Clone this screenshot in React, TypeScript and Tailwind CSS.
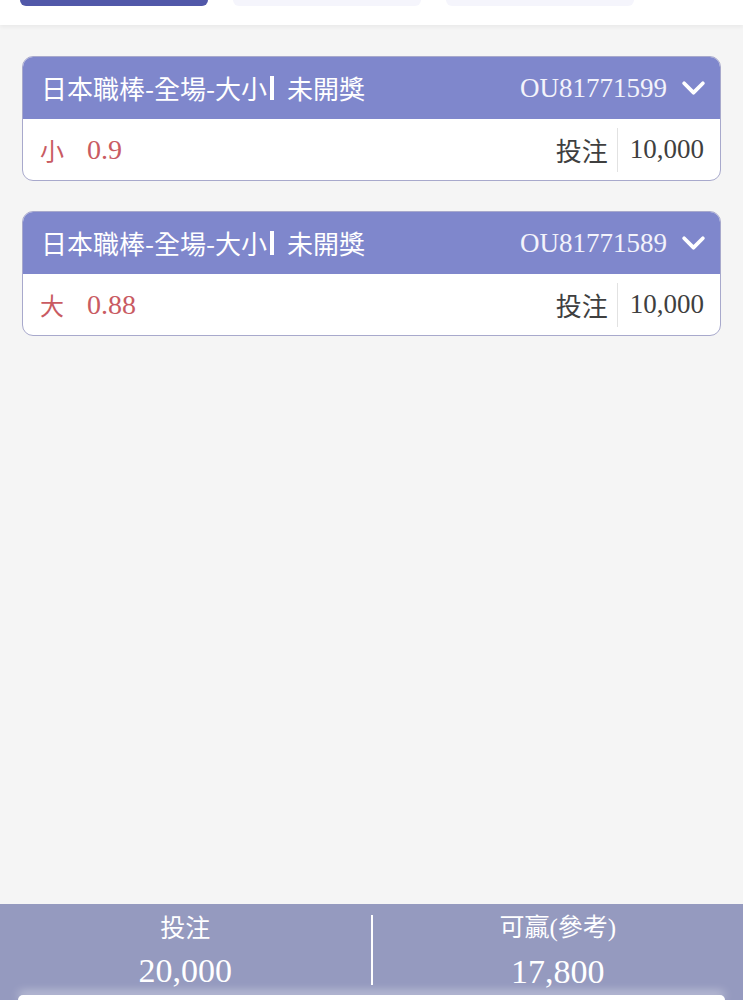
type Bet = {
  id: string
  pick: string
  odds: string
  stake: string
}

const bets: Bet[] = [
  { id: 'OU81771599', pick: '小', odds: '0.9', stake: '10,000' },
  { id: 'OU81771589', pick: '大', odds: '0.88', stake: '10,000' },
]

const cjk = "font-['Noto_Sans_CJK_TC','Noto_Sans',sans-serif]"
const serif = "font-['Liberation_Serif','Noto_Sans_CJK_TC',serif]"

function Chevron() {
  return (
    <svg viewBox="0 0 24 16" className="ml-[14px] h-[17px] w-[25px]" fill="none">
      <polyline
        points="3,3 12,12 21,3"
        stroke="white"
        strokeWidth="3.6"
        strokeLinecap="round"
        strokeLinejoin="round"
      />
    </svg>
  )
}

function BetCard({ bet }: { bet: Bet }) {
  return (
    <div className="overflow-hidden rounded-[11px] border-[1.5px] border-[#a8a9cc] bg-white">
      <div className="flex h-[62px] items-center justify-between pl-[18px] pr-[14px] text-white bg-[#7f87cc]">
        <div className={`${cjk} flex items-center text-[26px] leading-none`}>
          <span>日本職棒-全場-大小</span>
          <span className="ml-[3px] mr-[13px] h-[24px] w-[4px] bg-white" />
          <span>未開獎</span>
        </div>
        <div className="flex items-center">
          <span className={`${serif} text-[27px] leading-none text-[#f3f3fb]`}>{bet.id}</span>
          <Chevron />
        </div>
      </div>
      <div className="flex h-[61px] items-center justify-between pl-[17px] pr-[16px]">
        <div className="flex items-center text-[#c95b62]">
          <span className={`${cjk} text-[24px] leading-none`}>{bet.pick}</span>
          <span className={`${serif} ml-[23px] text-[28px] leading-none`}>{bet.odds}</span>
        </div>
        <div className="flex items-center text-[#3f3f3f]">
          <span className={`${cjk} text-[26px] leading-none`}>投注</span>
          <span className="ml-[9px] mr-[12px] h-[44px] w-px bg-[#e2e2e2]" />
          <span className={`${serif} text-[27px] leading-none`}>{bet.stake}</span>
        </div>
      </div>
    </div>
  )
}

export default function App() {
  return (
    <div className="flex h-[1000px] flex-col overflow-hidden bg-[#f5f5f5]">
      <div className="relative z-10 flex h-[25px] gap-[25px] bg-white pl-[20px] shadow-[0_2px_4px_rgba(0,0,0,0.05)]">
        <div className="h-[6px] w-[188px] rounded-b-[16px] bg-[#5158a9]" />
        <div className="h-[6px] w-[188px] rounded-b-[16px] bg-[#f5f5fc]" />
        <div className="h-[6px] w-[188px] rounded-b-[16px] bg-[#f5f5fc]" />
      </div>

      <div className="flex flex-1 flex-col gap-[30px] px-[22px] pt-[31px]">
        {bets.map((bet) => (
          <BetCard key={bet.id} bet={bet} />
        ))}
      </div>

      <div className="flex h-[96px] flex-col bg-[#959abf] text-white">
        <div className="flex flex-1 items-center">
          <div className="flex flex-1 flex-col items-center pt-[2px]">
            <span className={`${cjk} text-[25px] leading-none`}>投注</span>
            <span className={`${serif} mt-[15px] text-[34px] leading-none`}>20,000</span>
          </div>
          <div className="h-[70px] w-[2px] bg-white" />
          <div className="flex flex-1 flex-col items-center pt-[2px]">
            <span className={`${cjk} text-[25px] leading-none`}>
              可贏<span className={serif}>(</span>參考<span className={serif}>)</span>
            </span>
            <span className={`${serif} mt-[15px] text-[34px] leading-none`}>17,800</span>
          </div>
        </div>
        <div className="mx-[18px] h-[5px] rounded-t-[22px] bg-white shadow-[0_-3px_10px_rgba(255,255,255,0.6)]" />
      </div>
    </div>
  )
}
